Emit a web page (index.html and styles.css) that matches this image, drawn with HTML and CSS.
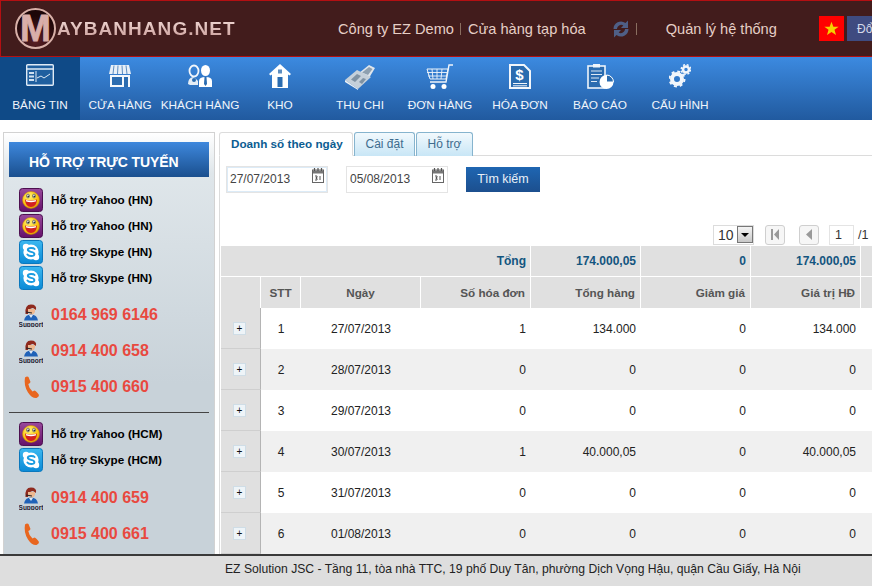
FILE: index.html
```html
<!DOCTYPE html>
<html lang="vi">
<head>
<meta charset="utf-8">
<title>Maybanhang.net</title>
<link rel="stylesheet" href="styles.css">
</head>
<body>
<svg class="defs" width="0" height="0">
  <defs>
    <radialGradient id="yface" cx=".4" cy=".3" r=".8"><stop offset="0" stop-color="#fff27a"/><stop offset=".6" stop-color="#fbc60f"/><stop offset="1" stop-color="#d98a00"/></radialGradient>
    <linearGradient id="ybg" x1="0" y1="0" x2="0" y2="1"><stop offset="0" stop-color="#9a4a9c"/><stop offset="1" stop-color="#65106a"/></linearGradient>
    <linearGradient id="sbg" x1="0" y1="0" x2="0" y2="1"><stop offset="0" stop-color="#3cb8f0"/><stop offset="1" stop-color="#0a8ad6"/></linearGradient>
    <symbol id="yahoo" viewBox="0 0 24 24">
      <rect x=".5" y=".5" width="23" height="23" rx="3" fill="url(#ybg)" stroke="#4d1050"/>
      <circle cx="12" cy="12" r="8.500" fill="url(#yface)" stroke="#c98400" stroke-width=".5"/>
      <ellipse cx="9" cy="8" rx="1.500" ry="1.900" fill="#fff" stroke="#333" stroke-width=".6"/>
      <ellipse cx="15" cy="8" rx="1.500" ry="1.900" fill="#fff" stroke="#333" stroke-width=".6"/>
      <circle cx="9.200" cy="8.400" r=".8" fill="#222"/><circle cx="15.200" cy="8.400" r=".8" fill="#222"/>
      <path d="M6 11.500 Q12 13.500 18 11.500 Q17.500 19 12 19 Q6.500 19 6 11.500Z" fill="#d42020"/>
      <path d="M7 12 Q12 13.500 17 12 L16.800 13.500 Q12 14.800 7.200 13.500Z" fill="#fff"/>
    </symbol>
    <symbol id="skype" viewBox="0 0 24 24">
      <rect x=".5" y=".5" width="23" height="23" rx="3" fill="url(#sbg)" stroke="#0b78bd"/>
      <circle cx="12" cy="12" r="7.600" fill="#fff"/><circle cx="7" cy="7" r="3.200" fill="#fff"/><circle cx="17" cy="17" r="3.200" fill="#fff"/>
      <path d="M15.600 9 C14.600 7.600 9 7.300 8.800 9.800 C8.700 12.600 15.600 11.200 15.400 14.200 C15.200 16.700 9.600 16.500 8.400 14.600" fill="none" stroke="#1a9ce0" stroke-width="1.900" stroke-linecap="round"/>
    </symbol>
    <symbol id="support" viewBox="0 0 24 24">
      <path d="M5 17.500 Q6 11.500 12 11.500 Q18 11.500 19 17.500Z" fill="#1f62b8"/>
      <path d="M10 12 L12 15 L14 12Z" fill="#dfe9f5"/>
      <path d="M6.500 11 Q5.500 1.500 12 1.500 Q18 1.500 17 7 L14 5 Q9.500 5 9 11Z" fill="#8f2a1e"/>
      <path d="M9 6 H16 V9 Q15 11.500 12.500 11.500 Q10 11 9 8.500Z" fill="#eeb890"/>
      <path d="M7 9 L13 10" stroke="#222" stroke-width="1"/>
      <text x="12" y="23.500" text-anchor="middle" class="support-word">Support</text>
    </symbol>
    <symbol id="phone" viewBox="0 0 24 24">
      <path d="M6 2.500 Q8 1 9.500 2 L11.500 7 Q11 8.600 9.300 9 Q10 13.500 13.500 16.600 L15.500 15.500 Q17.500 16 20 20 Q20 22 17.500 23 Q13 23.500 9 17.500 Q4.500 10.500 6 2.500Z" fill="#e8661f"/>
    </symbol>
    <symbol id="cal" viewBox="0 0 12 15">
      <rect x=".5" y="2" width="11" height="12.500" fill="#fff" stroke="#666"/>
      <rect x="1" y="2.500" width="10" height="3" fill="#777"/>
      <path d="M2.500 0v3M6 0v3M9.500 0v3" stroke="#555" stroke-width="1.200"/>
      <path d="M3 8h2v1.500h-1v1h1v1.500h-2M8 8v4" fill="none" stroke="#555"/>
    </symbol>
  </defs>
</svg>

<header class="topbar">
  <div class="logo">
    <span class="logo-disc">M</span><span class="logo-text">AYBANHANG.NET</span>
  </div>
  <div class="top-links">
    <span class="top-link">Công ty EZ Demo</span>
    <span class="top-sep"></span>
    <span class="top-link">Cửa hàng tạp hóa</span>
    <svg class="sync" width="18" height="20" viewBox="0 0 18 20"><path d="M1.500 10 A7.500 7.500 0 0 1 13.500 4 L16 1.500 V9 H9 L11.300 6.400 A4.200 4.200 0 0 0 5 10Z M16.500 10 A7.500 7.500 0 0 1 4.500 16 L2 18.500 V11 H9 L6.700 13.600 A4.200 4.200 0 0 0 13 10Z" fill="#4f5f86"/></svg>
    <span class="top-sep"></span>
    <span class="top-link system">Quản lý hệ thống</span>
  </div>
  <div class="flag"><svg width="15" height="15" viewBox="0 0 20 20"><path d="M10 1 L12.500 7.500 H19.500 L14 11.800 L16 18.800 L10 14.800 L4 18.800 L6 11.800 L.5 7.500 H7.500Z" fill="#f5d000"/></svg></div>
  <button class="switch">Đổ</button>
</header>

<nav class="mainnav">
  <a class="nav-item active">
    <svg class="nav-ico" width="28" height="22" viewBox="0 0 28 22"><rect x=".7" y=".7" width="26.600" height="20.600" rx="1" fill="#1f5f9f" stroke="#dfeaf5" stroke-width="1.400"/><path d="M1 5h26" stroke="#dfeaf5" stroke-width="1.500"/><path d="M3 8h5v2H3zM3 11.500h5v2H3zM3 15h5v2H3z" fill="#cfe0f0"/><path d="M10 7v11M11 14l4-2 3 2 6-4" fill="none" stroke="#dfeaf5"/></svg>
    <span>BẢNG TIN</span>
  </a>
  <a class="nav-item">
    <svg class="nav-ico" width="24" height="24" viewBox="0 0 24 24"><path d="M3 1h18l2 9H1z" fill="#e8f0f8"/><path d="M6 1.500 5 10M10 1.500 9.500 10M14 1.500l.5 8.500M18 1.500l1 8.500" stroke="#5d8dc0"/><path d="M2 11h20v12H2z" fill="#f4f8fc"/><path d="M4 13h10v8H4z" fill="#2b6cb0"/><path d="M16 13h4v10h-4z" fill="#2b6cb0"/></svg>
    <span>CỬA HÀNG</span>
  </a>
  <a class="nav-item">
    <svg class="nav-ico" width="26" height="24" viewBox="0 0 26 24"><ellipse cx="18.500" cy="6.500" rx="4.500" ry="5.500" fill="#fff"/><path d="M12 23v-6q0-4 6.500-4t6.500 4v6z" fill="#fff"/><path d="M17.500 13h2l.5 7-1.500 2-1.500-2z" fill="#2b6cb0"/><ellipse cx="7" cy="7" rx="4.500" ry="5.500" fill="none" stroke="#f2f6fb" stroke-width="1.800"/><path d="M1 20q0-6 5-7l3 2 2 2v4H3z" fill="#e4edf6"/><circle cx="7" cy="16" r="2" fill="#2b6cb0"/></svg>
    <span>KHÁCH HÀNG</span>
  </a>
  <a class="nav-item">
    <svg class="nav-ico" width="22" height="24" viewBox="0 0 22 24"><path d="M11 0 L22 10 L20.500 11.500 L19 10.500 V24 H3 V10.500 L1.500 11.500 L0 10Z" fill="#fff"/><rect x="8.500" y="13" width="5" height="10" fill="#2b6cb0"/><rect x="9" y="5.500" width="4" height="4" fill="#5d8dc0"/></svg>
    <span>KHO</span>
  </a>
  <a class="nav-item">
    <svg class="nav-ico" width="30" height="26" viewBox="0 0 30 26"><path d="M14 9 L24 1 L30 4 L24 14 Z" fill="#dfe6ec"/><path d="M17 8.500 L24 3 L27.500 5 L23 11Z" fill="#8ea0b0"/><path d="M0 16 L12 6 L26 13 L13 25Z" fill="#c5d0da"/><path d="M6 15.500 L12 10 L16 12 L10 18Z M14 18 L18 14 L21 15 L17 20Z" fill="#7f92a3"/><path d="M0 16v2l13 8v-1z" fill="#eef2f5"/></svg>
    <span>THU CHI</span>
  </a>
  <a class="nav-item">
    <svg class="nav-ico" width="28" height="26" viewBox="0 0 28 26"><path d="M27 1h-4l-3 17H4" fill="none" stroke="#eef4fa" stroke-width="1.400"/><path d="M1 5h21l-2 10H4z" fill="none" stroke="#eef4fa"/><path d="M1 8.500h20M2 12h19M6 5l1 10M11 5v10M16 5l-1 10" stroke="#eef4fa" stroke-width=".9"/><circle cx="7" cy="22.500" r="2.500" fill="#fff"/><circle cx="18" cy="22.500" r="2.500" fill="#fff"/></svg>
    <span>ĐƠN HÀNG</span>
  </a>
  <a class="nav-item">
    <svg class="nav-ico" width="22" height="25" viewBox="0 0 22 25"><path d="M1 1h14l6 6v17H1z" fill="#2b6cb0" stroke="#f2f6fb" stroke-width="2"/><text x="10.500" y="16" text-anchor="middle" class="dollar">$</text><path d="M4 19.500h14M4 21.800h14" stroke="#f2f6fb"/></svg>
    <span>HÓA ĐƠN</span>
  </a>
  <a class="nav-item">
    <svg class="nav-ico" width="27" height="26" viewBox="0 0 27 26"><rect x="1" y="2" width="17" height="22" fill="#2b6cb0" stroke="#eef4fa" stroke-width="1.600"/><rect x="6" y="0" width="7" height="3.500" fill="#eef4fa"/><path d="M4 7h11M4 10.500h11M4 14h8M4 17.500h6" stroke="#dce8f3"/><circle cx="19.500" cy="18" r="7" fill="#fff"/><path d="M19.500 18V11A7 7 0 0 1 26.500 18Z" fill="#2b6cb0" stroke="#fff"/></svg>
    <span>BÁO CÁO</span>
  </a>
  <a class="nav-item">
    <svg class="nav-ico" width="22" height="24" viewBox="0 0 22 24"><circle cx="8" cy="15" r="5" fill="none" stroke="#f2f6fb" stroke-width="4"/><circle cx="8" cy="15" r="7.500" fill="none" stroke="#f2f6fb" stroke-width="2" stroke-dasharray="3 2.900"/><circle cx="17" cy="5.500" r="3" fill="none" stroke="#f2f6fb" stroke-width="2.600"/><circle cx="17" cy="5.500" r="4.800" fill="none" stroke="#f2f6fb" stroke-width="1.400" stroke-dasharray="2 1.800"/></svg>
    <span>CẤU HÌNH</span>
  </a>
</nav>

<div class="content">
  <aside class="support">
    <h2 class="support-title">HỖ TRỢ TRỰC TUYẾN</h2>
    <ul class="chat-list">
      <li class="chat"><svg width="24" height="24"><use href="#yahoo"/></svg><span>Hỗ trợ Yahoo (HN)</span></li>
      <li class="chat"><svg width="24" height="24"><use href="#yahoo"/></svg><span>Hỗ trợ Yahoo (HN)</span></li>
      <li class="chat"><svg width="24" height="24"><use href="#skype"/></svg><span>Hỗ trợ Skype (HN)</span></li>
      <li class="chat"><svg width="24" height="24"><use href="#skype"/></svg><span>Hỗ trợ Skype (HN)</span></li>
    </ul>
    <ul class="phone-list">
      <li class="tel"><svg width="24" height="24"><use href="#support"/></svg>0164 969 6146</li>
      <li class="tel"><svg width="24" height="24"><use href="#support"/></svg>0914 400 658</li>
      <li class="tel"><svg width="24" height="24"><use href="#phone"/></svg>0915 400 660</li>
    </ul>
    <hr class="support-rule">
    <ul class="chat-list tight">
      <li class="chat"><svg width="24" height="24"><use href="#yahoo"/></svg><span>Hỗ trợ Yahoo (HCM)</span></li>
      <li class="chat"><svg width="24" height="24"><use href="#skype"/></svg><span>Hỗ trợ Skype (HCM)</span></li>
    </ul>
    <ul class="phone-list loose">
      <li class="tel"><svg width="24" height="24"><use href="#support"/></svg>0914 400 659</li>
      <li class="tel"><svg width="24" height="24"><use href="#phone"/></svg>0915 400 661</li>
    </ul>
  </aside>

  <main class="panel">
    <div class="tabs">
      <a class="tab current">Doanh số theo ngày</a>
      <a class="tab">Cài đặt</a>
      <a class="tab">Hỗ trợ</a>
    </div>
    <div class="tab-body">
      <div class="filters">
        <div class="date focus"><span>27/07/2013</span><svg width="12" height="15"><use href="#cal"/></svg></div>
        <div class="date"><span>05/08/2013</span><svg width="12" height="15"><use href="#cal"/></svg></div>
        <button class="search">Tìm kiếm</button>
      </div>
      <div class="pager">
        <div class="page-size"><span>10</span><i class="drop"></i></div>
        <button class="pg first"><svg width="10" height="11" viewBox="0 0 10 11"><path d="M1 0h2v11H1zM9 0v11L4 5.500z" fill="#9a9a9a"/></svg></button>
        <button class="pg prev"><svg width="7" height="11" viewBox="0 0 7 11"><path d="M6 0v11L0 5.500z" fill="#9a9a9a"/></svg></button>
        <span class="pg-num">1</span>
        <span class="pg-total">/1</span>
      </div>
      <table class="grid">
        <colgroup><col class="c-x"><col class="c-stt"><col class="c-date"><col class="c-n"><col class="c-n"><col class="c-n"><col class="c-n"><col class="c-n"></colgroup>
        <thead>
          <tr class="sum"><th colspan="4">Tổng</th><th>174.000,05</th><th>0</th><th>174.000,05</th><th></th></tr>
          <tr class="head"><th></th><th class="ctr">STT</th><th class="ctr">Ngày</th><th>Số hóa đơn</th><th>Tổng hàng</th><th>Giảm giá</th><th>Giá trị HĐ</th><th></th></tr>
        </thead>
        <tbody>
          <tr><td class="x"><b class="plus">+</b></td><td class="ctr">1</td><td class="ctr">27/07/2013</td><td>1</td><td>134.000</td><td>0</td><td>134.000</td><td></td></tr>
          <tr class="alt"><td class="x"><b class="plus">+</b></td><td class="ctr">2</td><td class="ctr">28/07/2013</td><td>0</td><td>0</td><td>0</td><td>0</td><td></td></tr>
          <tr><td class="x"><b class="plus">+</b></td><td class="ctr">3</td><td class="ctr">29/07/2013</td><td>0</td><td>0</td><td>0</td><td>0</td><td></td></tr>
          <tr class="alt"><td class="x"><b class="plus">+</b></td><td class="ctr">4</td><td class="ctr">30/07/2013</td><td>1</td><td>40.000,05</td><td>0</td><td>40.000,05</td><td></td></tr>
          <tr><td class="x"><b class="plus">+</b></td><td class="ctr">5</td><td class="ctr">31/07/2013</td><td>0</td><td>0</td><td>0</td><td>0</td><td></td></tr>
          <tr class="alt"><td class="x"><b class="plus">+</b></td><td class="ctr">6</td><td class="ctr">01/08/2013</td><td>0</td><td>0</td><td>0</td><td>0</td><td></td></tr>
        </tbody>
      </table>
    </div>
  </main>
</div>

<footer class="foot">EZ Solution JSC - Tầng 11, tòa nhà TTC, 19 phố Duy Tân, phường Dịch Vọng Hậu, quận Cầu Giấy, Hà Nội</footer>
</body>
</html>
```
FILE: styles.css
```css
* { box-sizing: border-box; }
html, body { margin: 0; height: 100%; overflow: hidden; }
body {
  display: flex; flex-direction: column; width: 872px; height: 586px;
  font-family: "Liberation Sans", Arial, sans-serif; background: #fff; color: #000;
}
.defs { position: absolute; }
ul { list-style: none; margin: 0; padding: 0; }
button { font-family: inherit; }

/* header */
.topbar {
  flex: none; height: 57px; display: flex; align-items: center; overflow: hidden;
  background: #421c1c; border: 1px solid #b40f12; border-width: 1px 0 1px 1px;
}
.logo { width: 337px; display: flex; align-items: center; padding-left: 14px; flex: none; }
.logo-disc {
  width: 41px; height: 41px; border-radius: 50%; border: 2px solid #d8b0a8;
  background: radial-gradient(circle at 50% 85%, #5a1f24 0, #1d0608 70%);
  font-size: 37px; font-weight: bold; color: #d9aeaa; -webkit-text-stroke: .8px #d9aeaa; text-align: center; line-height: 37px;
  flex: none; z-index: 1; overflow: hidden;
}
.logo-text {
  font-size: 19px; font-weight: bold; letter-spacing: 1.050px; margin-left: 1px;
  background: linear-gradient(#f2dcd8, #c89a96); -webkit-background-clip: text; background-clip: text; color: transparent;
}
.top-links { width: 481px; flex: none; display: flex; align-items: center; }
.top-link { font-size: 14.600px; color: #e6cfc6; line-height: 18px; }
.top-sep { width: 1px; height: 12px; background: #8a6e60; margin: 0 7px 0 6px; }
.sync { margin: 0 0 0 26px; }
.system { margin-left: 22px; }
.flag { width: 25px; height: 25px; flex: none; background: #f00; display: flex; align-items: center; justify-content: center; }
.switch {
  flex: 1; min-width: 0; height: 25px; margin-left: 3px; border: 0; padding: 0 0 0 10px; text-align: left;
  background: #3f4b80; color: #d5daea; font-size: 12px; white-space: nowrap;
}

/* nav */
.mainnav { flex: none; height: 63px; display: flex; background: linear-gradient(#3c8ae0, #215a9f); }
.nav-item {
  width: 80px; flex: none; display: flex; flex-direction: column; align-items: center;
  color: #f0f5fb; font-size: 11.800px; padding-top: 7px; white-space: nowrap;
}
.nav-item span { margin-top: auto; margin-bottom: 8px; }
.nav-ico { display: block; flex: none; }
.nav-item.active { background: #0f4a87; }

/* body */
.content { flex: 1; min-height: 0; display: flex; overflow: hidden; padding-top: 12px; }

.support {
  width: 212px; margin-left: 3px; flex: none; padding: 9px 5px 0; height: 430px;
  border: 1px solid #d2d2d2; border-width: 1px 1px 0 1px;
  background: linear-gradient(#fff 0, #dfe6ea 40px, #c8d2d9 250px, #c8d2d9 100%);
}
.support-title {
  margin: 0; height: 35px; line-height: 40px; padding-left: 20px; font-size: 14px; font-weight: bold; color: #fff;
  background: linear-gradient(#3e88dd, #1a4f8e); white-space: nowrap; letter-spacing: -.1px;
}
.chat-list { padding: 10px 0 0 10px; }
.chat-list.tight { padding-top: 8px; }
.chat { height: 26px; display: flex; align-items: center; gap: 8px; font-size: 11.700px; font-weight: bold; color: #000; white-space: nowrap; }
.chat span { margin-top: -2px; }
.phone-list { padding: 6px 0 0 10px; }
.phone-list.loose { padding-top: 7px; }
.tel { height: 36px; display: flex; align-items: center; gap: 8px; font-size: 16px; font-weight: bold; color: #e8493f; white-space: nowrap; }
.support-rule { border: 0; height: 1px; background: #444; margin: 7px 0 0; }
.support-word { font-size: 6.500px; font-weight: bold; fill: #223; font-family: "Liberation Sans", sans-serif; }
.dollar { font-size: 15px; font-weight: bold; fill: #fff; font-family: "Liberation Sans", sans-serif; }

.panel { flex: 1; min-width: 0; margin-left: 4px; }
.tabs { height: 24px; display: flex; gap: 1px; border-bottom: 1px solid #dcdcdc; }
.tab {
  height: 24px; padding: 0 10.500px; line-height: 23px; font-size: 12px; color: #3e6c8e;
  background: linear-gradient(#f2f9fd, #c8e6f6); border: 1px solid #86b4ce; border-bottom: 0; border-radius: 3px 3px 0 0; white-space: nowrap;
}
.tab.current {
  width: 134px; padding: 0 0 0 11px; font-size: 11.700px; line-height: 22px; font-weight: bold; color: #0c5d92;
  background: #fff; border-color: #dcdcdc; border-bottom: 1px solid #fff;
}
.tab-body { border-left: 1px solid #dcdcdc; padding-left: 1px; height: 398px; }

.filters { display: flex; align-items: center; padding: 9px 0 0 5px; height: 37px; }
.date {
  width: 102px; height: 27px; display: flex; justify-content: space-between; padding: 0 3px 0 3px;
  border: 1px solid #e4e4e4; font-size: 12px; color: #444; line-height: 24px; margin-right: 18px;
}
.date svg { margin-top: 1px; }
.date.focus { box-shadow: inset 0 0 0 1px #dcebf7; }
.search {
  width: 74px; height: 25px; margin-left: 0; border: 0; padding: 0; font-size: 12.500px; color: #e8f0f8;
  background: linear-gradient(#1f66b2, #1c4f8e);
}

.pager { display: flex; align-items: center; justify-content: flex-start; margin-top: 31px; height: 21px; padding-left: 492px; font-size: 12.500px; color: #333; white-space: nowrap; }
.page-size { width: 41px; height: 20px; border: 1px solid #dcdcdc; display: flex; align-items: center; justify-content: space-between; padding: 0 0 0 4px; font-size: 14px; }
.drop { width: 16px; height: 17px; background: linear-gradient(#f4f4f4, #c8c8c8); border: 1px solid #777; display: flex; align-items: center; justify-content: center; }
.drop::after { content: ""; border: 4px solid transparent; border-top: 4px solid #000; border-bottom: 0; }
.pg { width: 20px; height: 20px; margin-left: 11px; padding: 0; border: 1px solid #cfcfcf; border-radius: 3px; background: #f6f6f6; display: flex; align-items: center; justify-content: center; }
.pg.prev { margin-left: 14px; }
.pg-num { width: 25px; height: 20px; margin-left: 10px; padding-left: 5px; border: 1px solid #e4e4e4; line-height: 18px; }
.pg-total { margin-left: 4px; }

.grid { table-layout: fixed; width: 701px; margin-top: 1px; border-collapse: separate; border-spacing: 0; font-size: 12px; color: #222; }
.c-x { width: 40px; }
.c-stt { width: 40px; }
.c-date { width: 120px; }
.c-n { width: 110px; }
.grid th { background: #e0e0e0; font-size: 11.700px; font-weight: bold; text-align: right; padding: 0 5px; border-right: 1px solid #fff; }
.grid .sum th { height: 31px; font-size: 12px; padding-right: 4px; color: #13557f; border-bottom: 1px solid #fff; }
.head th { height: 31px; color: #555; }
.grid td { height: 41px; padding: 0 5px 0 0; text-align: right; }
.grid .ctr { text-align: center; padding: 0; }
.grid .x { background: #e0e0e0; text-align: center; padding: 0 2px 0 0; border-right: 1px solid #b4b4b4; border-bottom: 1px solid #cfcfcf; }
.alt td { background: #f0f0f0; }
.alt td.x { background: #e0e0e0; }
.plus {
  display: inline-block; width: 13px; height: 13px; line-height: 11px; text-align: center; font-size: 10px; font-weight: normal;
  background: #eef4f8; border: 1px solid #cfdde6; color: #111;
}

.foot {
  flex: none; height: 32px; background: #dedede; border-top: 2px solid #3a3a3a;
  padding: 5px 0 0 225px; font-size: 12.150px; color: #222; white-space: nowrap; line-height: 16px;
}
```
